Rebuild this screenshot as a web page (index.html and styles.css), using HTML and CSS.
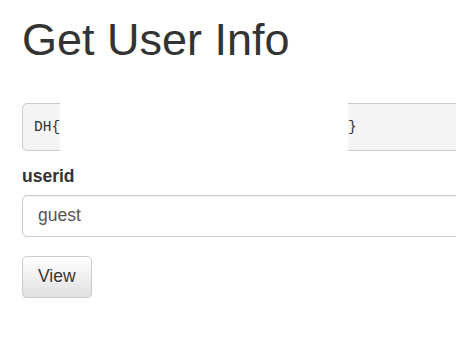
FILE: index.html
```html
<!DOCTYPE html>
<html lang="en">
<head>
    <meta charset="UTF-8">
    <meta name="viewport" content="width=device-width, initial-scale=1.0">
    <title>Get User Info</title>
    <link rel="stylesheet" href="styles.css">
</head>
<body>
    <div class="container">
        <h1>Get User Info</h1>
        <pre class="flag">DH{<span class="redact"></span>}</pre>
        <form class="user-form">
            <div class="form-group">
                <label for="userid">userid</label>
                <input type="text" id="userid" class="form-control" value="guest">
            </div>
            <button type="button" class="btn">View</button>
        </form>
    </div>
</body>
</html>
```

FILE: styles.css
```css
/* base */
html, body {
    overflow-x: hidden;
}

body {
    margin: 0;
    font-family: "Liberation Sans", Arial, Helvetica, sans-serif;
    font-size: 17.5px;
    line-height: 1.42857;
    color: #333;
    background-color: #fff;
}

.container {
    width: 720px;
    padding: 0 22px;
}

h1 {
    font-size: 45px;
    font-weight: 500;
    line-height: 50px;
    margin: 15px 0 38px;
}

/* flag box */
.flag {
    margin: 0 0 13px;
    padding: 11px 11px;
    font-family: "Liberation Mono", Consolas, monospace;
    font-size: 14.5px;
    line-height: 24px;
    color: #333;
    background-color: #f4f4f4;
    border: 1px solid #ccc;
    border-radius: 5px;
}

.flag .redact {
    display: inline-block;
    vertical-align: top;
    width: 288px;
    height: 48px;
    margin: -12px 0;
    background-color: #fff;
}

/* form */
.form-group {
    margin-bottom: 19px;
}

.form-group label {
    display: block;
    font-weight: bold;
    margin-bottom: 6px;
}

.form-control {
    display: block;
    box-sizing: border-box;
    width: 100%;
    height: 42px;
    padding: 7px 15px;
    font-family: inherit;
    font-size: 17.5px;
    color: #555;
    background-color: #fff;
    border: 1px solid #ccc;
    border-radius: 5px;
    box-shadow: inset 0 1px 1px rgba(0, 0, 0, 0.075);
}

.btn {
    display: inline-block;
    padding: 7.5px 15px;
    font-family: inherit;
    font-size: 17.5px;
    line-height: 1.42857;
    color: #333;
    text-shadow: 0 1px 0 #fff;
    background-image: linear-gradient(to bottom, #fff 0, #e0e0e0 100%);
    border: 1px solid #ccc;
    border-radius: 5px;
    box-shadow: inset 0 1px 0 rgba(255, 255, 255, 0.15), 0 1px 1px rgba(0, 0, 0, 0.075);
    cursor: pointer;
}
```
